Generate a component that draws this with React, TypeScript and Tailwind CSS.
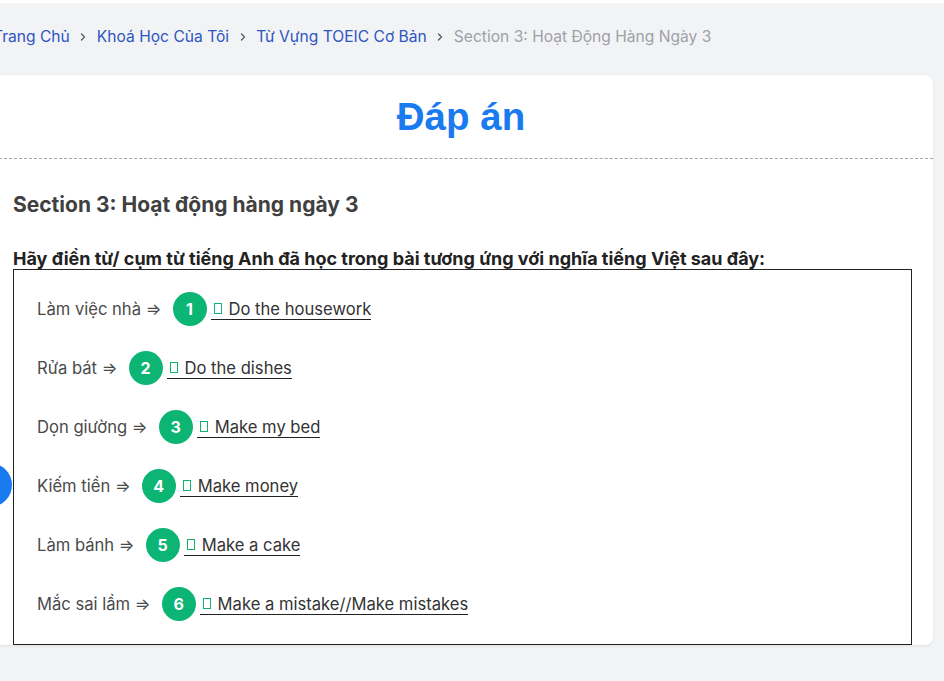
import { ChevronRight } from "lucide-react";

const CRUMBS = ["Trang Chủ", "Khoá Học Của Tôi", "Từ Vựng TOEIC Cơ Bản"];

const ANSWERS = [
  { vi: "Làm việc nhà", en: "Do the housework" },
  { vi: "Rửa bát", en: "Do the dishes" },
  { vi: "Dọn giường", en: "Make my bed" },
  { vi: "Kiếm tiền", en: "Make money" },
  { vi: "Làm bánh", en: "Make a cake" },
  { vi: "Mắc sai lầm", en: "Make a mistake//Make mistakes" },
];

const App = () => {
  return (
    <div className="relative min-h-screen overflow-hidden border-t-[3px] border-white bg-[#f2f3f5] font-['Inter',sans-serif]">
      <div className="ml-[-11px] w-[944px]">
        {/* breadcrumb */}
        <nav className="flex items-center pl-[4px] pt-[22px] pb-[26px] text-[15.6px] leading-6">
          {CRUMBS.map((c) => (
            <span key={c} className="flex items-center">
              <span className="text-[#2f55c2]">{c}</span>
              <ChevronRight size={12} strokeWidth={2.5} className="mx-[7.5px] text-[#555]" />
            </span>
          ))}
          <span className="text-[#9ea1a6]">Section 3: Hoạt Động Hàng Ngày 3</span>
        </nav>

        {/* card */}
        <div className="rounded-lg bg-white shadow-[0_1px_3px_rgba(0,0,0,0.08)]">
          <div className="flex h-[84px] items-center justify-center border-b border-dashed border-[#a3a3a3] pt-[2px]">
            <h1 className="font-['Liberation_Sans',Arial,sans-serif] text-[38.5px] font-bold leading-none text-[#1a7af0]">
              Đáp án
            </h1>
          </div>

          <div className="px-[24px] pt-[32px]">
            <h2 className="text-[21px] font-bold leading-[28px] text-[#404040]">
              Section 3: Hoạt động hàng ngày 3
            </h2>
            <p className="mt-[30px] text-[18px] font-bold leading-[20px] text-[#222]">
              Hãy điền từ/ cụm từ tiếng Anh đã học trong bài tương ứng với nghĩa tiếng Việt sau đây:
            </p>

            <div className="flex w-[899px] flex-col gap-[25px] border border-[#222] pl-[23px] pt-[22px] pb-[23px]">
              {ANSWERS.map((a, i) => (
                <div key={a.vi} className="flex h-[34px] items-center text-[16.6px] leading-6">
                  <span className="text-[#4a4a4a]">{a.vi} ⇒</span>
                  <span className="ml-[11px] flex h-[34px] w-[34px] items-center justify-center rounded-full bg-[#0cb574] text-[16px] font-bold text-white">
                    {i + 1}
                  </span>
                  <span className="ml-[4px] flex items-center border-b border-[#222] leading-[20px] text-[#333]">
                    <span className="ml-[3px] mr-[7px] inline-block h-[11px] w-[8px] border border-[#10b26f]" />
                    {a.en}
                  </span>
                </div>
              ))}
            </div>
          </div>
        </div>
      </div>

      {/* floating button, mostly off screen */}
      <div className="absolute left-[-32px] top-[460px] h-[44px] w-[44px] rounded-full bg-[#1a7af0]" />
    </div>
  );
};

export default App;
